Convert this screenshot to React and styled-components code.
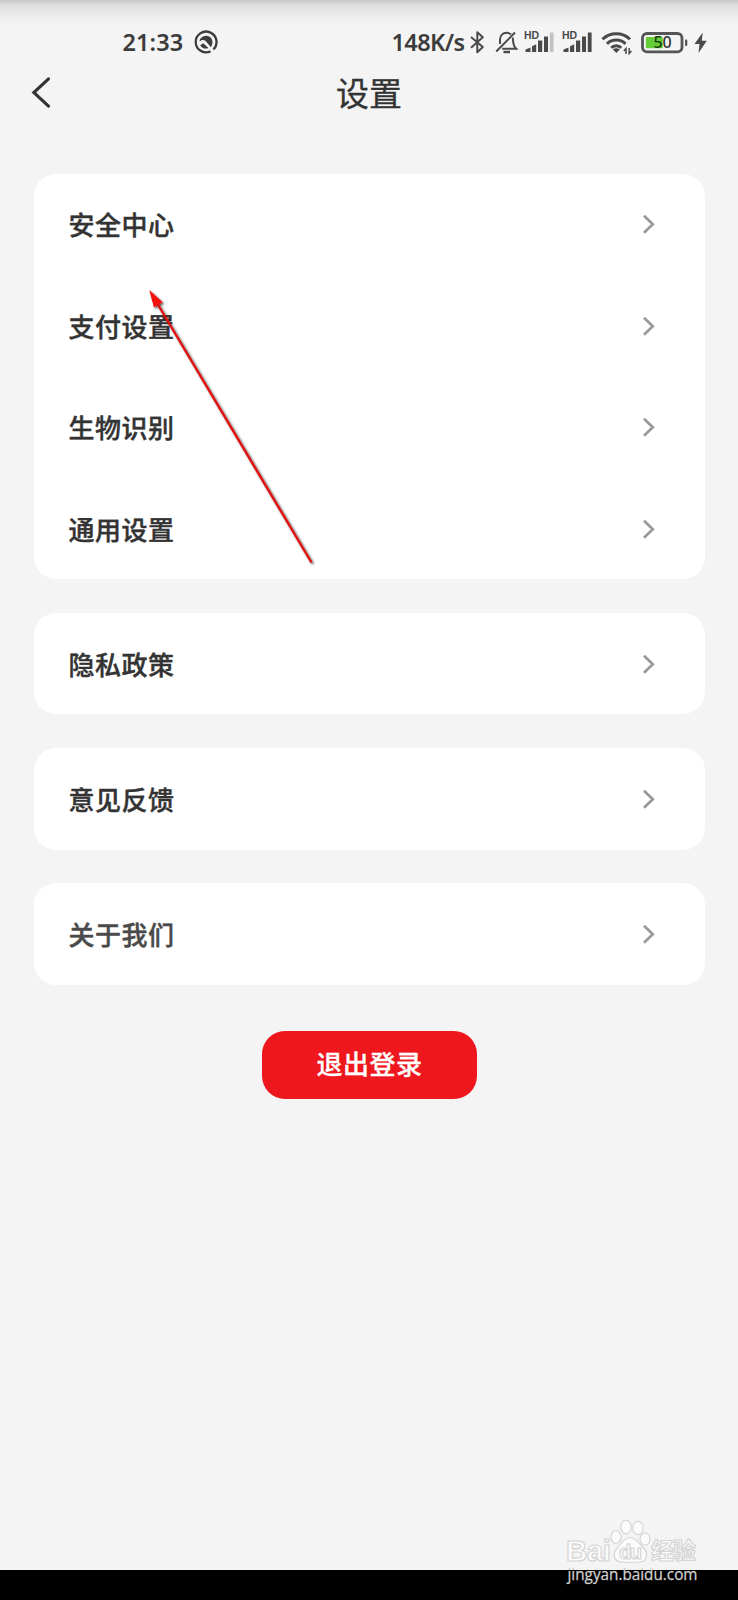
// App.jsx
import React from "react";
import styled, { createGlobalStyle } from "styled-components";

const GlobalStyle = createGlobalStyle`
  * {
    box-sizing: border-box;
  }

  body {
    margin: 0;
    background: #f4f4f4;
    font-family: "Noto Sans CJK SC", sans-serif;
  }
`;

const Screen = styled.div`
  position: relative;
  display: flex;
  flex-direction: column;
  width: 738px;
  height: 1600px;
  overflow: hidden;
  background: #f4f4f4;
`;

// Status bar
const StatusBar = styled.div`
  display: flex;
  justify-content: space-between;
  height: 60px;
  padding: 29px 30.5px 0 122.5px;
  background: linear-gradient(#c9c9c9 0, #cdcdcd 2px, #dedede 5px, #ebebeb 14px, #f4f4f4 26px);
`;

const StatusGroup = styled.div`
  display: flex;
  align-items: flex-start;
`;

const StatusText = styled.span`
  width: ${(props) => props.$width}px;
  font-family: "Noto Sans", sans-serif;
  font-size: 23.5px;
  font-weight: 600;
  line-height: 27px;
  letter-spacing: ${(props) => props.$spacing}px;
  white-space: nowrap;
  color: #3c3c3c;
`;

const StatusIcon = styled.svg`
  flex: none;
  height: 27px;
  margin-left: ${(props) => props.$gap}px;
`;

// Header
const Header = styled.header`
  display: grid;
  grid-template-columns: 80px 1fr 80px;
  align-items: center;
  height: 66px;
`;

const BackButton = styled.button`
  display: flex;
  padding: 0 0 0 30px;
  border: 0;
  background: none;
`;

const Title = styled.h1`
  margin: 0;
  padding-bottom: 2px;
  font-size: 33px;
  font-weight: 400;
  line-height: 48px;
  text-align: center;
  color: #333;
  -webkit-text-stroke: 0.3px #333;
`;

// Settings list
const Content = styled.main`
  display: flex;
  flex: 1;
  flex-direction: column;
  align-items: center;
  gap: 33.8px;
  padding: 47.7px 33px 0 34px;
`;

const Card = styled.section`
  width: 100%;
  border-radius: 22px;
  background: #fff;
`;

const Row = styled.div`
  display: flex;
  align-items: center;
  justify-content: space-between;
  height: 101.4px;
  padding: 0 49.5px 0 34.5px;
`;

const Label = styled.span`
  font-size: 26px;
  font-weight: 500;
  letter-spacing: 0.5px;
  line-height: 40px;
  color: ${(props) => (props.$light ? "#4a4a4a" : "#333")};
  -webkit-text-stroke: 0.4px currentColor;
`;

const LogoutButton = styled.button`
  width: 215px;
  height: 68px;
  margin-top: 12px;
  padding: 0 0 5px;
  border: 0;
  border-radius: 23px;
  background: #ee171e;
  color: #fff;
  font-family: inherit;
  font-size: 26px;
  font-weight: 500;
  letter-spacing: 0.5px;
  -webkit-text-stroke: 0.3px #fff;
`;

const NavigationBar = styled.div`
  height: 30px;
  background: #000;
`;

// Things drawn over the page
const ArrowOverlay = styled.svg`
  position: absolute;
  left: 140px;
  top: 280px;
`;

const Watermark = styled.svg`
  position: absolute;
  left: 560px;
  top: 1515px;
`;

const groups = [
  ["安全中心", "支付设置", "生物识别", "通用设置"],
  ["隐私政策"],
  ["意见反馈"],
  ["关于我们"],
];

const Chevron = () => (
  <svg width="14" height="22" viewBox="0 0 14 22" fill="none">
    <path d="M2 2.8 L10.8 11.3 L2 19.8" stroke="#999" strokeWidth="2.7" />
  </svg>
);

const Signal = ({ gap, weak }) => (
  <StatusIcon $gap={gap} width="30" viewBox="0 0 30 27" fill="#4a4a4a">
    <text x="0" y="9.8" fontFamily="Liberation Sans, sans-serif" fontSize="10.5" fontWeight="700">
      HD
    </text>
    <path d="M1.5 23 V20.5 L6.5 18.5 V23 Z" />
    <path d="M8 23 V17.3 L12.2 15.2 V23 Z" />
    <rect x="14" y="11.5" width="4.2" height="11.5" />
    <rect x="20" y="7.5" width="4" height="15.5" />
    <rect x="25.8" y="3.5" width="3.8" height="19.5" fill={weak ? "#c2c2c2" : "#4a4a4a"} />
  </StatusIcon>
);

const StatusIcons = () => (
  <>
    {/* Bluetooth */}
    <StatusIcon $gap={0} width="16" viewBox="0 0 16 27" fill="none">
      <path
        d="M1 8 L12.8 18 L7.3 23.2 V3.2 L12.8 8.3 L1 18.8"
        stroke="#4a4a4a"
        strokeWidth="2"
        strokeLinejoin="round"
      />
    </StatusIcon>
    {/* Muted bell */}
    <StatusIcon $gap={9} width="23" viewBox="0 0 23 27" fill="none" stroke="#4a4a4a" strokeWidth="2">
      <path d="M5 15 V10.5 C5 6.5 8 3.8 11.5 3.8 C13.5 3.8 14.8 4.3 16 5.5" />
      <path d="M17.8 8.5 C18.2 12.5 17.6 16.5 21.2 19.8 H7.2" />
      <path d="M8.5 23 H15" strokeWidth="2.4" />
      <path d="M1.2 22.5 L20 3.5" />
    </StatusIcon>
    <Signal gap={6.5} weak />
    <Signal gap={7.5} />
    {/* Wi-Fi */}
    <StatusIcon $gap={9} width="31" viewBox="0 0 31 27" fill="none" stroke="#4a4a4a" strokeWidth="3">
      <path d="M1.5 10.2 C9 2.8 21.5 2.8 29 10.2" />
      <path d="M6 14.8 C11.2 9.8 19.3 9.8 24.5 14.8" />
      <path d="M10.2 18.8 C13 16 17.5 16 20.3 18.8" />
      <path d="M11.8 20.5 C14 18.8 16.5 18.8 18.8 20.5 L15.3 24 Z" fill="#4a4a4a" stroke="none" />
      <path d="M25 25 V19.5 L22.8 22 M28.2 19 V24.5 L30.4 22" strokeWidth="1.5" />
    </StatusIcon>
    {/* Battery */}
    <StatusIcon $gap={9} width="47" viewBox="0 0 47 27">
      <rect x="1.5" y="4.5" width="39.5" height="18.3" rx="4.5" fill="none" stroke="#555" strokeWidth="2.8" />
      <rect x="4.8" y="8" width="17" height="11.3" rx="1" fill="#65cd38" />
      <rect x="44" y="10.5" width="2.3" height="6.5" rx="1" fill="#555" />
      <text x="21.6" y="19.4" textAnchor="middle" fontFamily="Noto Sans, sans-serif" fontSize="16" fontWeight="500">
        <tspan fill="#173d08">5</tspan>
        <tspan fill="#333">0</tspan>
      </text>
    </StatusIcon>
    {/* Charging */}
    <StatusIcon $gap={6} width="14" viewBox="0 0 14 27">
      <path d="M8.7 3.5 L0.5 15 H5.5 L4.5 24 L12.8 11.8 H7.8 Z" fill="#4a4a4a" />
    </StatusIcon>
  </>
);

const App = () => {
  return (
    <Screen>
      <GlobalStyle />
      <StatusBar>
        <StatusGroup>
          <StatusText $width={71} $spacing={0.1}>
            21:33
          </StatusText>
          <StatusIcon $gap={0} width="24" viewBox="0 0 24 27" fill="none">
            <path
              d="M16.5 22.4 A10.4 10.4 0 1 1 19.4 20.4"
              stroke="#3c3c3c"
              strokeWidth="2.3"
            />
            <path
              d="M7 9 C10.5 5.8 15.2 6.2 17.4 9.5 C19 12 18.8 14.8 17 18.2 L11.8 12.2 C10.5 11 8.8 10.6 7 11.5 L5.6 12.6 C5.6 11 6 10 7 9 Z"
              fill="#3c3c3c"
            />
            <path d="M6.2 16.2 L9.2 14.2 L14.5 19 C11.5 20.3 8 19.5 6.2 16.2 Z" fill="#3c3c3c" />
          </StatusIcon>
        </StatusGroup>
        <StatusGroup>
          <StatusText $width={78} $spacing={-0.6}>
            148K/s
          </StatusText>
          <StatusIcons />
        </StatusGroup>
      </StatusBar>

      <Header>
        <BackButton aria-label="返回">
          <svg width="22" height="34" viewBox="0 0 22 34" fill="none">
            <path
              d="M18.5 2.8 L3.8 16.5 L18.5 30.2"
              stroke="#333"
              strokeWidth="3.1"
              strokeLinecap="round"
            />
          </svg>
        </BackButton>
        <Title>设置</Title>
      </Header>

      <Content>
        {groups.map((items, index) => (
          <Card key={index}>
            {items.map((item) => (
              <Row key={item}>
                <Label $light={item === "关于我们"}>{item}</Label>
                <Chevron />
              </Row>
            ))}
          </Card>
        ))}
        <LogoutButton>退出登录</LogoutButton>
      </Content>

      <NavigationBar />

      <ArrowOverlay width="190" height="300" viewBox="0 0 190 300">
        <defs>
          <filter id="arrowShadow" x="-10%" y="-10%" width="120%" height="120%">
            <feDropShadow dx="1.5" dy="1.5" stdDeviation="1.3" floodColor="#000" floodOpacity="0.7" />
          </filter>
        </defs>
        <g filter="url(#arrowShadow)">
          <path d="M17 23 L171.5 282.5" stroke="#e00b0b" strokeWidth="2.3" />
          <path d="M9.3 10 L22.8 22.6 L18.5 24 L14 27.5 Z" fill="#f80808" />
        </g>
      </ArrowOverlay>

      <Watermark width="150" height="85" viewBox="0 0 150 85">
        <g fill="#fbfbfb" stroke="#d3d3d3" strokeWidth="1.1">
          <text x="6" y="46" fontFamily="Liberation Sans, sans-serif" fontSize="29.5" fontWeight="700" textLength="45">
            Bai
          </text>
          <ellipse cx="56" cy="22" rx="5" ry="6.5" />
          <ellipse cx="66" cy="12" rx="5.2" ry="6.7" />
          <ellipse cx="78" cy="13" rx="5.2" ry="6.7" />
          <ellipse cx="85" cy="24" rx="5" ry="6.2" />
          <path d="M70 22.5 C64 22.5 61 29 57 33.5 C52 38 54 46.5 61 47 C66 47.3 75 47.3 80 47 C87 46 88.5 38 84 33.5 C79 29 76 22.5 70 22.5 Z" />
          <text x="59" y="43.5" fontFamily="Liberation Sans, sans-serif" fontSize="20" fontWeight="700" textLength="23">
            du
          </text>
          <text x="91" y="44" fontFamily="Noto Sans CJK SC, sans-serif" fontSize="23" fontWeight="700" textLength="45">
            经验
          </text>
        </g>
        <text
          x="7.5"
          y="64.5"
          fill="#d2d2d2"
          stroke="#d2d2d2"
          strokeWidth="0.25"
          fontFamily="Open Sans, sans-serif"
          fontSize="15.5"
          textLength="130"
          lengthAdjust="spacingAndGlyphs"
        >
          jingyan.baidu.com
        </text>
      </Watermark>
    </Screen>
  );
};

export default App;
